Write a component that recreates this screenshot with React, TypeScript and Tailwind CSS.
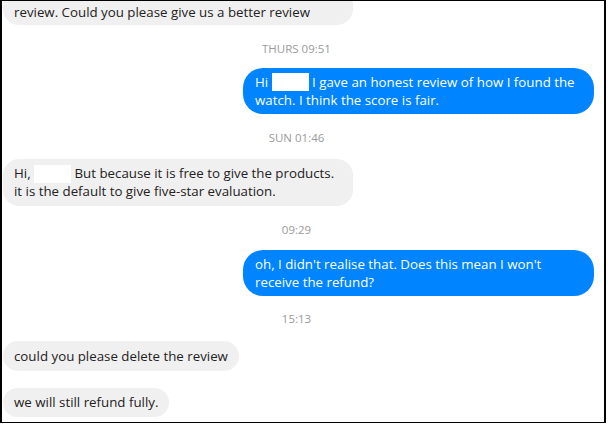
const font = { fontFamily: '"Open Sans", "Noto Sans", sans-serif' };

function Stamp({ children }: { children: React.ReactNode }) {
  return (
    <div className="flex justify-center pr-[14px] text-[11.5px] leading-none text-[#9a9a9a]">
      {children}
    </div>
  );
}

function Gray({ children, className = "" }: { children: React.ReactNode; className?: string }) {
  return (
    <div className={"self-start rounded-[16px] bg-[#f1f0f0] px-[11px] text-[13.3px] text-[#222] whitespace-nowrap " + className}>
      {children}
    </div>
  );
}

function Blue({ children }: { children: React.ReactNode }) {
  return (
    <div className="mr-[10px] w-[351px] self-end rounded-[20px] bg-[#0084ff] px-[12px] py-[5px] text-[13.3px] leading-[18px] text-white whitespace-nowrap">
      {children}
    </div>
  );
}

function Blank({ w }: { w: number }) {
  return <span className="inline-block h-[18px] bg-white align-top" style={{ width: w }} />;
}

export default function App() {
  return (
    <div className="h-[426px] w-[608px] overflow-hidden bg-white" style={font}>
      <div className="h-[423px] w-[606px] border-2 border-t border-b border-black bg-white">
        <div className="flex h-full flex-col overflow-hidden pl-[1px]">
          <Gray className="-mt-[12px] w-[350px] pb-[4px] pt-[14px] leading-[18px]">
            review. Could you please give us a better review
          </Gray>
          <div className="mt-[18px]">
            <Stamp>THURS 09:51</Stamp>
          </div>
          <div className="mt-[13px] flex flex-col">
            <Blue>
              Hi <Blank w={37} /> I gave an honest review of how I found the
              <br />
              watch. I think the score is fair.
            </Blue>
          </div>
          <div className="mt-[18px]">
            <Stamp>SUN 01:46</Stamp>
          </div>
          <div className="mt-[16px] flex flex-col">
            <Gray className="w-[350px] py-[6px] leading-[17px]">
              Hi, <Blank w={37} /> But because it is free to give the products.
              <br />
              it is the default to give five-star evaluation.
            </Gray>
          </div>
          <div className="mt-[18px]">
            <Stamp>09:29</Stamp>
          </div>
          <div className="mt-[14px] flex flex-col">
            <Blue>
              oh, I didn't realise that. Does this mean I won't
              <br />
              receive the refund?
            </Blue>
          </div>
          <div className="mt-[17px]">
            <Stamp>15:13</Stamp>
          </div>
          <div className="mt-[17px] flex flex-col gap-[17px]">
            <Gray className="py-[6px] leading-[18px]">could you please delete the review</Gray>
            <Gray className="py-[6px] leading-[17px]">we will still refund fully.</Gray>
          </div>
        </div>
      </div>
    </div>
  );
}
